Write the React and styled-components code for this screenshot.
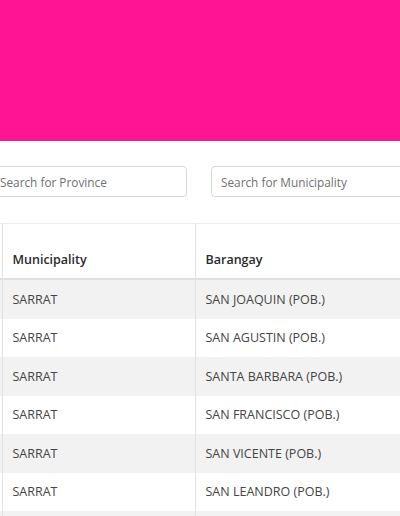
import styled, { createGlobalStyle } from "styled-components";

const Global = createGlobalStyle`
    html, body{
        margin: 0;
        padding: 0;
        background: #fff;
        overflow: hidden;
        font-family: "Open Sans", "Noto Sans", sans-serif;
        color: #3a3a3a;
    }
`;

const Banner = styled.header`
    height: 141px;
    background-color: #ff1493;
`;

const Page = styled.main`
    margin-left: -10px;
    width: 430px;
`;

const Filters = styled.div`
    display: flex;
    gap: 24px;
    padding-top: 25px;
`;

const Search = styled.input`
    box-sizing: border-box;
    width: 197px;
    height: 31px;
    padding: 0 9px;
    border: 1px solid #d6d9dc;
    border-radius: 4px;
    font-family: inherit;
    font-size: 11.8px;
    color: #444;
    outline: none;

    &::placeholder{
        color: #707070;
    }
`;

const TableWrap = styled.div`
    margin-top: 26px;
    margin-left: -140px;
`;

const Table = styled.table`
    border-collapse: collapse;
    table-layout: fixed;
    width: 600px;
    font-size: 12.5px;
    border-top: 1px solid #ececec;

    th, td{
        text-align: left;
        padding: 0 10px;
        border-right: 1px solid #e2e2e2;
        white-space: nowrap;
        overflow: hidden;
    }

    th{
        height: 44px;
        vertical-align: bottom;
        padding-bottom: 10px;
        font-weight: 600;
        color: #2b2b2b;
        border-bottom: 2px solid #e0e0e0;
    }

    td{
        height: 38.5px;
        vertical-align: middle;
        color: #444;
    }

    tbody tr:nth-child(odd){
        background-color: #f2f2f2;
    }
`;

const Col = styled.col`
    width: ${(p) => p.$w}px;
`;

const rows = [
    "SAN JOAQUIN (POB.)",
    "SAN AGUSTIN (POB.)",
    "SANTA BARBARA (POB.)",
    "SAN FRANCISCO (POB.)",
    "SAN VICENTE (POB.)",
    "SAN LEANDRO (POB.)",
    "SAN MARCOS (POB.)",
];

const App = () => {
    return (
        <>
            <Global />
            <Banner />
            <Page>
                <Filters>
                    <Search placeholder="Search for Province" />
                    <Search placeholder="Search for Municipality" />
                </Filters>
                <TableWrap>
                    <Table>
                        <colgroup>
                            <Col $w={152} />
                            <Col $w={193} />
                            <Col $w={255} />
                        </colgroup>
                        <thead>
                            <tr>
                                <th>Province</th>
                                <th>Municipality</th>
                                <th>Barangay</th>
                            </tr>
                        </thead>
                        <tbody>
                            {rows.map((b) => (
                                <tr key={b}>
                                    <td>ILOCOS NORTE</td>
                                    <td>SARRAT</td>
                                    <td>{b}</td>
                                </tr>
                            ))}
                        </tbody>
                    </Table>
                </TableWrap>
            </Page>
        </>
    );
};

export default App;
